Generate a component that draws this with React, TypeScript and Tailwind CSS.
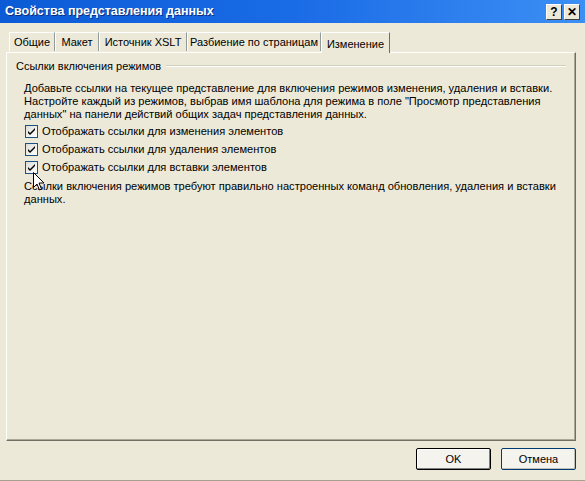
import React from 'react';

const tabs = [
  { label: 'Общие', w: 'w-[46px]' },
  { label: 'Макет', w: 'w-[44px]' },
  { label: 'Источник XSLT', w: 'w-[88px]' },
  { label: 'Разбиение по страницам', w: 'w-[134px]' },
];

const options = [
  'Отображать ссылки для изменения элементов',
  'Отображать ссылки для удаления элементов',
  'Отображать ссылки для вставки элементов',
];

const CheckBox = () => (
  <span className="w-[13px] h-[13px] border border-[#1c5180] bg-gradient-to-br from-[#dcdcd7] to-white flex items-center justify-center shrink-0">
    <svg width="9" height="9" viewBox="0 0 9 9">
      <path d="M1 4 L3 6 L8 1 L8 3 L3 8 L1 6 Z" fill="#000" />
    </svg>
  </span>
);

const TitleButton = ({ children }: { children: React.ReactNode }) => (
  <button className="w-[16px] h-[16px] bg-[#ece9d8] border border-t-white border-l-white border-r-[#404040] border-b-[#404040] flex items-center justify-center text-[12px] font-bold leading-none text-black">
    {children}
  </button>
);

export default function App() {
  return (
    <div className="w-[585px] h-[481px] bg-[#ece9d8] flex flex-col border-b border-[#a4a08c] font-['Liberation_Sans',sans-serif] text-[11px] text-black relative overflow-hidden">
      {/* title bar */}
      <div className="h-[23px] shrink-0 bg-gradient-to-r from-[#0a5bd5] via-[#1a6be6] to-[#3c8ff4] flex items-center justify-between pl-[5px] pr-[5px]">
        <span className="text-white font-bold text-[12.5px] [text-shadow:1px_1px_0_#0a2f80]">
          Свойства представления данных
        </span>
        <div className="flex gap-[2px]">
          <TitleButton>?</TitleButton>
          <TitleButton>✕</TitleButton>
        </div>
      </div>

      {/* tabs */}
      <div className="flex items-end pl-[9px] mt-[8px] h-[21px] relative z-10">
        {tabs.map((t) => (
          <div
            key={t.label}
            className={`${t.w} h-[19px] mb-[1px] flex items-center justify-center border-t border-l border-r border-t-white border-l-white border-r-[#919b9c] whitespace-nowrap`}
          >
            {t.label}
          </div>
        ))}
        <div className="w-[69px] h-[21px] -mb-px flex items-start pt-[3px] justify-center border-t border-l border-r border-t-white border-l-white border-r-[#716f64] bg-[#ece9d8]">
          Изменение
        </div>
      </div>

      {/* panel */}
      <div className="mx-[6px] w-[570px] h-[389px] border-t border-l border-white border-r border-b border-r-[#716f64] border-b-[#716f64] shadow-[inset_-1px_-1px_0_#aca899] pt-[5px] px-[8px]">
        <div className="flex items-center gap-[5px]">
          <span className="ml-px">Ссылки включения режимов</span>
          <div className="flex-1 mr-[1px] border-t border-[#d0d0bf] border-b-white h-[2px] border-b" />
        </div>
        <div className="pl-[9px] pt-[7px] leading-[13px] whitespace-nowrap text-[11.1px]">
          <p>
            Добавьте ссылки на текущее представление для включения режимов изменения, удаления и вставки.
            <br />
            Настройте каждый из режимов, выбрав имя шаблона для режима в поле "Просмотр представления
            <br />
            данных" на панели действий общих задач представления данных.
          </p>
          <div className="flex flex-col gap-[5px] mt-[4px] pl-px">
            {options.map((o) => (
              <label key={o} className="flex items-center gap-[4px] h-[13px]">
                <CheckBox />
                <span>{o}</span>
              </label>
            ))}
          </div>
          <p className="mt-[6px]">
            Ссылки включения режимов требуют правильно настроенных команд обновления, удаления и вставки
            <br />
            данных.
          </p>
        </div>
      </div>

      {/* buttons */}
      <div className="flex justify-end gap-[10px] pr-[9px] mt-[7px]">
        <button className="w-[75px] h-[22px] bg-[#f4f3ee] border border-black rounded-[2px] shadow-[inset_-1px_-1px_0_#808080,inset_1px_1px_0_#fff] text-[11px]">
          OK
        </button>
        <button className="w-[75px] h-[22px] bg-[#f4f3ee] border border-[#003c74] rounded-[2px] shadow-[inset_-1px_-1px_0_#c0bfb5] text-[11px]">
          Отмена
        </button>
      </div>

      {/* mouse pointer */}
      <svg className="absolute left-[33px] top-[172px]" width="12" height="19" viewBox="0 0 12 19">
        <path d="M0.5 0.5 L0.5 15.5 L4 12 L6.5 18 L8.5 17 L6 11 L11 11 Z" fill="#fff" stroke="#000" strokeWidth="1" />
      </svg>
    </div>
  );
}
